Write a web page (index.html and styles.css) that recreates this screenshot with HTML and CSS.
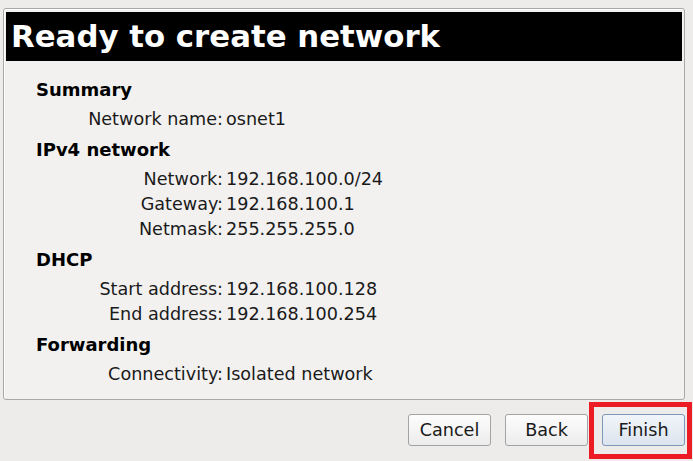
FILE: index.html
```html
<!DOCTYPE html>
<html>
<head>
<meta charset="utf-8">
<link rel="stylesheet" href="styles.css">
</head>
<body>
<div class="window">
  <div class="panel">
    <div class="title-bar"><h1 class="title">Ready to create network</h1></div>
    <div class="summary">
      <div class="section">
        <div class="section-title">Summary</div>
        <div class="row"><span class="label">Network name:</span><span class="value">osnet1</span></div>
      </div>
      <div class="section">
        <div class="section-title">IPv4 network</div>
        <div class="row"><span class="label">Network:</span><span class="value">192.168.100.0/24</span></div>
        <div class="row"><span class="label">Gateway:</span><span class="value">192.168.100.1</span></div>
        <div class="row"><span class="label">Netmask:</span><span class="value">255.255.255.0</span></div>
      </div>
      <div class="section">
        <div class="section-title">DHCP</div>
        <div class="row"><span class="label">Start address:</span><span class="value">192.168.100.128</span></div>
        <div class="row"><span class="label">End address:</span><span class="value">192.168.100.254</span></div>
      </div>
      <div class="section">
        <div class="section-title">Forwarding</div>
        <div class="row"><span class="label">Connectivity:</span><span class="value">Isolated network</span></div>
      </div>
    </div>
  </div>
  <div class="buttons">
    <button class="btn">Cancel</button>
    <button class="btn">Back</button>
    <button class="btn btn-default">Finish</button>
  </div>
  <div class="highlight"></div>
</div>
</body>
</html>
```

FILE: styles.css
```css
html, body {
  margin: 0;
  padding: 0;
}
body {
  background: #edeceb;
  font-family: "DejaVu Sans", "Liberation Sans", sans-serif;
  font-size: 17.6px;
  color: #1a1a1a;
  width: 693px;
  height: 461px;
  overflow: hidden;
}
.window {
  position: relative;
  width: 693px;
  height: 461px;
  padding-top: 8px;
  box-sizing: border-box;
}
.panel {
  margin-left: 3px;
  width: 682px;
  height: 392px;
  box-sizing: border-box;
  border: 1px solid #a9a8a7;
  border-radius: 3px;
  background: #f2f1f0;
  padding: 3px 2px 2px 2px;
  box-shadow: inset 1px 1px 0 #ffffff;
}
.title-bar {
  background: #000;
  height: 49px;
  display: flex;
  align-items: center;
  padding-left: 5px;
}
.title {
  margin: 0;
  color: #fff;
  font-size: 30.8px;
  font-weight: bold;
  line-height: 1;
}
.summary {
  padding: 16px 0 0 30px;
  display: flex;
  flex-direction: column;
  gap: 5px;
}
.section-title {
  font-weight: bold;
  font-size: 18px;
  line-height: 25px;
  margin-bottom: 5px;
  color: #000;
}
.row {
  display: grid;
  grid-template-columns: 187px 1fr;
  column-gap: 3px;
  line-height: 25px;
}
.label {
  text-align: right;
}
.buttons {
  display: flex;
  justify-content: flex-end;
  gap: 14px;
  padding: 14px 8px 0 0;
}
.btn {
  width: 83px;
  height: 32px;
  box-sizing: border-box;
  font-family: "DejaVu Sans", "Liberation Sans", sans-serif;
  font-size: 17.6px;
  color: #1a1a1a;
  border: 1px solid #a3a3a3;
  border-radius: 3px;
  background: linear-gradient(#fdfdfd, #ececec);
  padding: 0;
}
.btn-default {
  border-color: #7d97b8;
  background: linear-gradient(#f1f5fa, #dce4ee);
}
.highlight {
  position: absolute;
  left: 589px;
  top: 402px;
  width: 103px;
  height: 57px;
  box-sizing: border-box;
  border: 5px solid #ec1c24;
}
```
